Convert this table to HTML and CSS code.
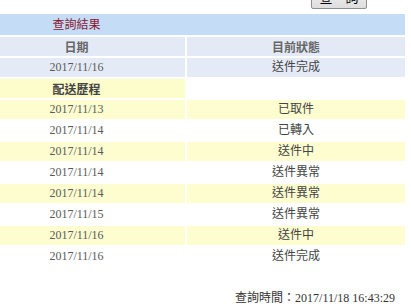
FILE: index.html
```html
<!DOCTYPE html>
<html lang="zh-Hant">
<head>
<meta charset="utf-8">
<title>查詢結果</title>
<link rel="stylesheet" href="styles.css">
</head>
<body>
<div class="topbar">
  <button class="btn" type="button">查　詢</button>
</div>
<table class="result">
  <colgroup><col class="c1"><col class="c2"></colgroup>
  <tr class="title"><td colspan="2"><span class="title-text">查詢結果</span></td></tr>
  <tr class="head"><th>日期</th><th>目前狀態</th></tr>
  <tr class="cur"><td class="date">2017/11/16</td><td>送件完成</td></tr>
  <tr class="section"><td class="sec">配送歷程</td><td class="blank"></td></tr>
  <tr class="y"><td class="date">2017/11/13</td><td>已取件</td></tr>
  <tr class="w"><td class="date">2017/11/14</td><td>已轉入</td></tr>
  <tr class="y"><td class="date">2017/11/14</td><td>送件中</td></tr>
  <tr class="w"><td class="date">2017/11/14</td><td>送件異常</td></tr>
  <tr class="y"><td class="date">2017/11/14</td><td>送件異常</td></tr>
  <tr class="w"><td class="date">2017/11/15</td><td>送件異常</td></tr>
  <tr class="y"><td class="date">2017/11/16</td><td>送件中</td></tr>
  <tr class="w"><td class="date">2017/11/16</td><td>送件完成</td></tr>
</table>
<div class="qtime">查詢時間：2017/11/18 16:43:29</div>
</body>
</html>
```
FILE: styles.css
```css
html, body {
  margin: 0;
  padding: 0;
  background: #ffffff;
  overflow: hidden;
}
body {
  font-family: "Liberation Serif", "Noto Sans CJK TC", serif;
  font-size: 12px;
  color: #555555;
  width: 411px;
  height: 308px;
}
.topbar {
  height: 12px;
  display: flex;
  justify-content: flex-end;
  align-items: flex-end;
  padding-right: 44px;
  padding-bottom: 0;
  box-sizing: border-box;
}
.btn {
  flex: none;
  width: 56px;
  height: 24px;
  margin-bottom: 3px;
  padding: 0;
  border: 1px solid #8f8f8f;
  border-radius: 2px;
  background: linear-gradient(#f4f4f4, #dedede);
  font-family: "Noto Sans CJK TC", sans-serif;
  font-size: 13px;
  line-height: 22px;
  color: #000;
}
.result {
  border-collapse: separate;
  border-spacing: 2px;
  margin-left: -34px;
  width: 441px;
  table-layout: fixed;
}
.c1 { width: 217px; }
.c2 { width: 218px; }
.result td, .result th {
  height: 19px;
  padding: 0;
  line-height: 19px;
  text-align: center;
  white-space: nowrap;
}
.title td {
  background: #c5dcf6;
  text-align: left;
}
.title-text {
  display: inline-block;
  width: 217px;
  text-align: center;
  font-family: "Noto Sans CJK TC", sans-serif;
  color: #8a1530;
}
.head th {
  background: #e3eaf5;
  font-family: "Noto Sans CJK TC", sans-serif;
  font-weight: bold;
  color: #666666;
}
.cur td {
  background: #e5ebf6;
}
.section .sec {
  background: #fdfdcc;
  font-family: "Noto Sans CJK TC", sans-serif;
  font-weight: bold;
  color: #555555;
}
.section .blank {
  background: #ffffff;
}
.y td { background: #fdfdd0; }
.w td { background: #ffffff; }
.result td:not(.date) {
  color: #444444;
}
.date {
  color: #5a5a5a;
}
.qtime {
  margin-top: 22px;
  text-align: right;
  padding-right: 16px;
  color: #333333;
  line-height: 16px;
}
```
